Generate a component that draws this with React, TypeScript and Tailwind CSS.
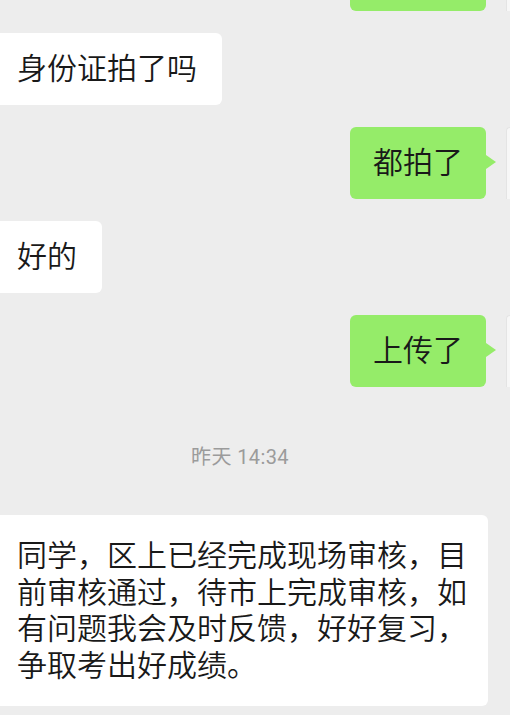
import type { ReactNode } from 'react';

const font = { fontFamily: 'Roboto, "Noto Sans CJK SC", sans-serif' };

function Mine({ children, className = '' }: { children?: ReactNode; className?: string }) {
  return (
    <div className={`flex justify-end gap-[20px] ${className}`}>
      <div className="relative flex h-[72px] w-[136px] items-center rounded-[6px] bg-[#95ec69] pl-[23px] text-[30px] leading-[36px] text-[#191919]">
        {children}
        <span className="absolute right-[-10px] top-[28px] h-0 w-0 border-y-[7px] border-l-[10px] border-y-transparent border-l-[#95ec69]" />
      </div>
      <div className="h-[72px] w-[4px] rounded-tl-[4px] border-l border-t border-[#e4e4e4] bg-[#f7f7f7]" />
    </div>
  );
}

function Theirs({ children, className = '' }: { children: ReactNode; className?: string }) {
  return (
    <div className={`flex ${className}`}>
      <div className="flex h-[72px] items-center rounded-r-[6px] bg-white pl-[17px] pr-[25px] text-[30px] leading-[36px] text-[#191919]">
        {children}
      </div>
    </div>
  );
}

export default function App() {
  return (
    <div style={font} className="flex h-[715px] w-[510px] flex-col overflow-hidden bg-[#ededed] font-[350]">
      <Mine className="mt-[-61px]" />
      <Theirs className="mt-[22px]">身份证拍了吗</Theirs>
      <Mine className="mt-[22px]">都拍了</Mine>
      <Theirs className="mt-[22px]">好的</Theirs>
      <Mine className="mt-[22px]">上传了</Mine>

      <div className="mt-[60px] pl-[191px] text-[20px] font-normal leading-[20px] tracking-[0.4px] text-[#9b9b9b]">昨天 14:34</div>

      <div className="mt-[48px] w-[488px] rounded-r-[6px] bg-white pb-[21px] pl-[17px] pr-[19px] pt-[23px] text-[30px] leading-[36.67px] text-[#191919]">
        同学，区上已经完成现场审核，目前审核通过，待市上完成审核，如有问题我会及时反馈，好好复习，争取考出好成绩。
      </div>
    </div>
  );
}
